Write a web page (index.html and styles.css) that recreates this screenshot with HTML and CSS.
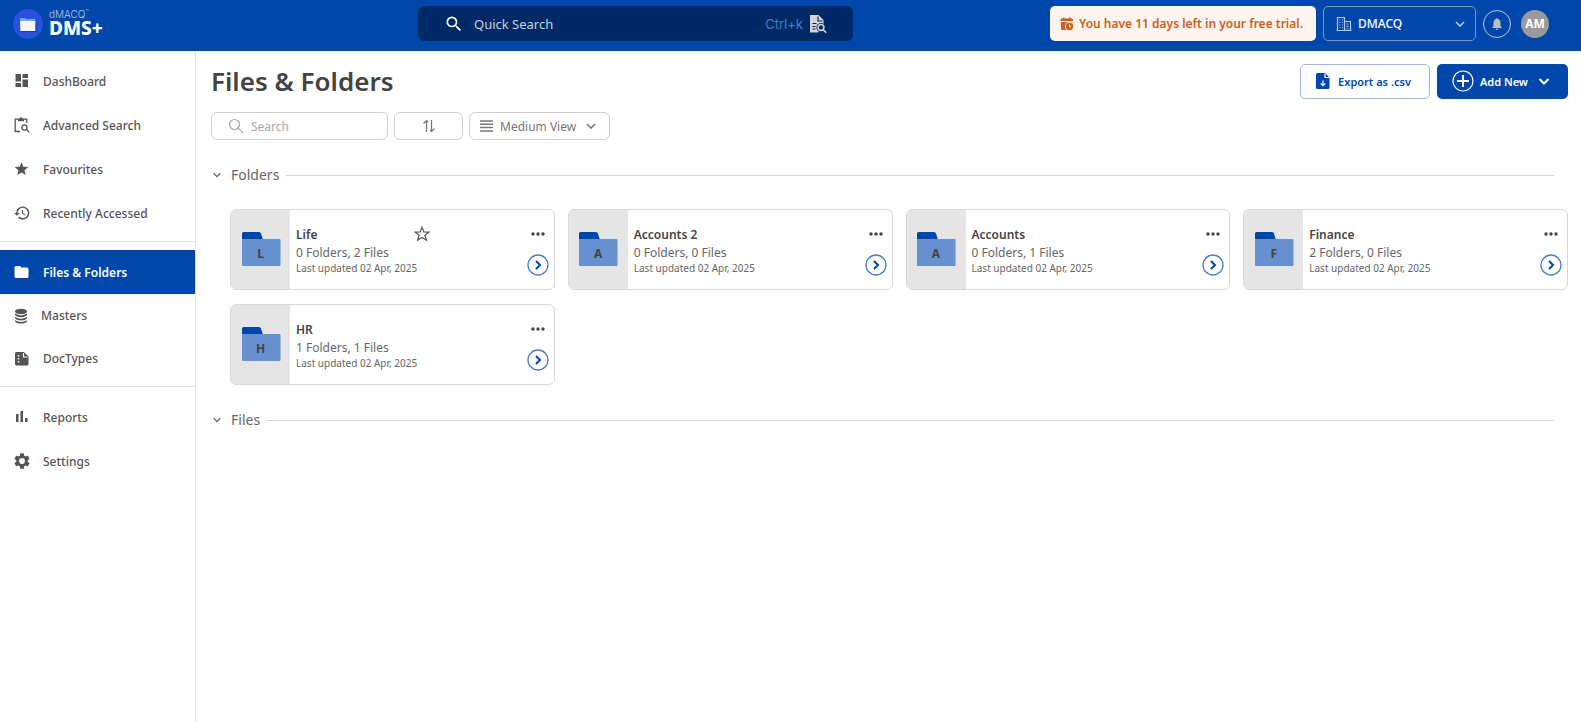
FILE: index.html
```html
<!DOCTYPE html>
<html lang="en">
<head>
    <meta charset="UTF-8">
    <meta name="viewport" content="width=device-width, initial-scale=1.0">
    <title>Files &amp; Folders</title>
    <link rel="stylesheet" href="styles.css">
</head>
<body>
    <!-- shared icons -->
    <svg class="sprite" aria-hidden="true">
        <symbol id="chevron" viewBox="0 0 12 12"><path d="M2 4l4 4 4-4" fill="none" stroke="currentColor" stroke-width="1.6"/></symbol>
        <symbol id="folder" viewBox="0 0 40 36">
            <path d="M1 9V2.500Q1 1 2.500 1H18q1.500 0 2 1.500L22 9z" fill="#0047ab"/>
            <path d="M1 8h37.500q1 0 1 1v25q0 1-1 1H2q-1 0-1-1z" fill="#6790d0"/>
        </symbol>
        <symbol id="dots" viewBox="0 0 14 4"><circle cx="2" cy="2" r="1.700"/><circle cx="7" cy="2" r="1.700"/><circle cx="12" cy="2" r="1.700"/></symbol>
        <symbol id="open" viewBox="0 0 22 22">
            <circle cx="11" cy="11" r="10" fill="none" stroke="#4a7cc8" stroke-width="1.300"/>
            <path d="M9 7l4 4-4 4" fill="none" stroke="#0047ab" stroke-width="2"/>
        </symbol>
    </svg>

    <header class="topbar">
        <a href="#" class="logo">
            <svg width="30" height="30" viewBox="0 0 30 30">
                <circle cx="15" cy="15" r="15" fill="#2a50dd"/>
                <path d="M7 9h5l1 1h9v4H7z" fill="#6ea6e4"/>
                <path d="M7 12h15.500v10H7.500z" fill="#f4f6f8"/>
                <path d="M8 22.500h15v-9" fill="none" stroke="#1f3fae" stroke-width="1"/>
            </svg>
            <span class="logo-text">
                <span class="logo-small">dMACQ<sup>™</sup></span>
                <span class="logo-big">DMS+</span>
            </span>
        </a>
        <div class="quick-search">
            <svg width="20" height="20" viewBox="0 0 24 24" fill="#fff"><path d="M15.500 14h-.79l-.28-.27A6.470 6.470 0 0 0 16 9.500 6.500 6.500 0 1 0 9.500 16c1.610 0 3.090-.59 4.230-1.570l.27.28v.79l5 4.990L20.490 19l-4.990-5zm-6 0C7.010 14 5 11.990 5 9.500S7.010 5 9.500 5 14 7.010 14 9.500 11.990 14 9.500 14z"/></svg>
            <input type="text" placeholder="Quick Search" aria-label="Quick Search">
            <span class="shortcut">Ctrl+k</span>
            <svg width="18" height="18" viewBox="0 0 18 18">
                <path d="M1 0h8.500l5 5v5L9 17.500H1z" fill="#d4d4d8"/>
                <path d="M9 1.500V6h4.500M3.500 8.500h4M3.500 11.500h3M3.500 14h3" fill="none" stroke="#002a66" stroke-width="1.200"/>
                <circle cx="12" cy="12.500" r="4.600" fill="#002a66"/>
                <circle cx="12" cy="12.500" r="2.900" fill="none" stroke="#d4d4d8" stroke-width="1.500"/>
                <path d="M14.200 14.700l3 3" stroke="#d4d4d8" stroke-width="1.600"/>
            </svg>
        </div>
        <div class="top-right">
            <div class="trial">
                <svg width="14" height="14" viewBox="0 0 14 14">
                    <path d="M3 .5h1.500v1H9v-1h1.500v1H12q1 0 1 1V4H.500V2.500q0-1 1-1H3z" fill="#c9601c"/>
                    <path d="M1 5h11.500v4H7v4H2.500Q1 13 1 11.500z" fill="#c9601c"/>
                    <circle cx="9.500" cy="9.500" r="4.500" fill="#fff4ef"/>
                    <circle cx="9.500" cy="9.500" r="3.700" fill="#c9601c"/>
                    <path d="M9.500 7.700v2h1.600" fill="none" stroke="#fff4ef"/>
                </svg>
                <span>You have 11 days left in your free trial.</span>
            </div>
            <label class="company">
                <svg width="16" height="16" viewBox="0 0 16 16" fill="none" stroke="#b5c7e8" stroke-width="1.200">
                    <path d="M1.500 14.500v-13h7v13M8.500 5.500h6v9M.5 14.500h15M3.500 4h1M6 4h1M3.500 6.500h1M6 6.500h1M3.500 9h1M6 9h1M3.500 11.500h1M6 11.500h1M10.500 8h2M10.500 10.500h2M10.500 13h2"/>
                </svg>
                <select aria-label="Company"><option>DMACQ</option></select>
                <svg class="company-arrow" width="12" height="12"><use href="#chevron"/></svg>
            </label>
            <button type="button" class="bell" aria-label="Notifications">
                <svg width="12" height="14" viewBox="0 0 12 14" fill="#b9bdc4"><path d="M6 1.200c.6 0 .9.400.9.900 1.700.4 2.600 1.800 2.600 3.600V9l1.200 1.300v.7H1.300v-.7L2.500 9V5.700c0-1.800.9-3.200 2.600-3.600 0-.5.300-.9.900-.9zM4.800 11.700h2.400a1.200 1.200 0 0 1-2.400 0z"/></svg>
            </button>
            <button type="button" class="avatar">AM</button>
        </div>
    </header>

    <div class="layout">
        <nav class="sidebar">
            <div class="nav-group">
                <a href="#" class="nav-item">
                    <svg width="16" height="16" viewBox="0 0 16 16"><path d="M1.500 1h5.500v7.500H1.500zM8.500 1H14v4H8.500zM1.500 10H7v4H1.500zM8.500 6.500H14V14H8.500z"/></svg>
                    <span>DashBoard</span>
                </a>
                <a href="#" class="nav-item">
                    <svg width="16" height="16" viewBox="0 0 16 16">
                        <g fill="none" stroke="currentColor" stroke-width="1.300">
                            <path d="M6 14.500H1.200V2.200H4M10 2.200h2.800V6"/>
                            <circle cx="10.500" cy="10.500" r="2.600"/><path d="M12.400 12.400l2.800 2.800"/>
                        </g>
                        <path d="M4 1.500h6v2.700H4z"/><circle cx="7" cy="1.500" r="1.300"/>
                    </svg>
                    <span>Advanced Search</span>
                </a>
                <a href="#" class="nav-item">
                    <svg width="16" height="16" viewBox="0 0 16 16"><path d="M7.500 1.200l1.900 4.500 4.900.4-3.700 3.200 1.100 4.800-4.200-2.600-4.200 2.600 1.100-4.800L.7 6.100l4.900-.4z"/></svg>
                    <span>Favourites</span>
                </a>
                <a href="#" class="nav-item">
                    <svg width="16" height="16" viewBox="1 1 22 22"><path d="M13 3a9 9 0 0 0-9 9H1l3.900 3.900L9 12H6a7 7 0 1 1 2.060 4.940l-1.420 1.420A9 9 0 1 0 13 3zm-1 5v5l4.280 2.540.72-1.210-3.500-2.080V8z"/></svg>
                    <span>Recently Accessed</span>
                </a>
            </div>
            <div class="nav-group">
                <a href="#" class="nav-item active">
                    <svg width="16" height="16" viewBox="0 0 16 16"><path d="M2 2h4l1.500 1.500H13q1.500 0 1.500 1.500v7.500q0 1.500-1.500 1.500H2Q.5 14 .5 12.500v-9Q.5 2 2 2z"/></svg>
                    <span>Files &amp; Folders</span>
                </a>
                <a href="#" class="nav-item short">
                    <svg width="14" height="16" viewBox="0 0 14 16"><ellipse cx="7" cy="3.500" rx="6" ry="2.700"/><path d="M1 5.600q6 3.600 12 0v1.200q-1 2.400-6 2.400T1 6.800zM1 8.900q6 3.600 12 0v1.200q-1 2.400-6 2.400t-6-2.400zM1 12.200q6 3.600 12 0v1q-1 2.400-6 2.400t-6-2.400z"/></svg>
                    <span>Masters</span>
                </a>
                <a href="#" class="nav-item short">
                    <svg width="16" height="16" viewBox="0 0 16 16"><path d="M2.500 1H10l4.500 4.500v7.500q0 1.500-1.500 1.500H2.500Q1 14.500 1 13V2.500Q1 1 2.500 1z"/><path d="M9.500 2v4h4" fill="none" stroke="#fff" stroke-width="1.200"/><path d="M4.500 4v8" stroke="#fff" stroke-width="1.500" stroke-dasharray="1.500 1.500"/></svg>
                    <span>DocTypes</span>
                </a>
            </div>
            <div class="nav-group">
                <a href="#" class="nav-item">
                    <svg width="16" height="16" viewBox="0 0 16 16"><path d="M2 5h2.500v8H2zM6.500 2H9v11H6.500zM11 9h2.500v4H11z"/></svg>
                    <span>Reports</span>
                </a>
                <a href="#" class="nav-item">
                    <svg width="16" height="16" viewBox="2 2 20 20"><path d="M19.140 12.940c.04-.3.060-.61.060-.94s-.02-.64-.07-.94l2.030-1.580c.18-.14.230-.41.120-.61l-1.920-3.320c-.12-.22-.37-.29-.59-.22l-2.390.96c-.5-.38-1.030-.7-1.620-.94l-.36-2.540A.48.48 0 0 0 13.920 2.400h-3.840c-.24 0-.43.170-.47.410l-.36 2.540c-.59.240-1.130.570-1.620.94l-2.390-.96c-.22-.08-.47 0-.59.220L2.740 8.870c-.12.210-.08.470.12.610l2.030 1.580c-.05.300-.09.630-.09.94s.02.640.07.94l-2.030 1.580c-.18.140-.23.410-.12.610l1.920 3.320c.12.220.37.290.59.220l2.390-.96c.5.380 1.030.700 1.620.94l.36 2.540c.05.240.24.410.48.410h3.840c.24 0 .44-.17.470-.41l.36-2.540c.59-.24 1.130-.56 1.620-.94l2.390.96c.22.080.47 0 .59-.22l1.920-3.320c.12-.22.070-.47-.12-.61zM12 15.600a3.600 3.600 0 1 1 0-7.200 3.600 3.600 0 0 1 0 7.200z"/></svg>
                    <span>Settings</span>
                </a>
            </div>
        </nav>

        <main class="content">
            <div class="title-bar">
                <h1>Files &amp; Folders</h1>
                <div class="actions">
                    <button type="button" class="btn btn-outline">
                        <svg width="14" height="16" viewBox="0 0 14 16"><path d="M1.500 0H9l4.500 4.500v10q0 1.500-1.500 1.500H1.500Q0 16 0 14.500v-13Q0 0 1.500 0z" fill="#0047ab"/><path d="M9 .5v4h4.500M7 7.500v5M4.700 10.300L7 12.600l2.300-2.300" fill="none" stroke="#fff" stroke-width="1.200"/></svg>
                        Export as .csv
                    </button>
                    <button type="button" class="btn btn-primary">
                        <svg width="22" height="22" viewBox="0 0 22 22" fill="none" stroke="#fff"><circle cx="11" cy="11" r="10" stroke-width="1.200"/><path d="M11 5v12M5 11h12" stroke-width="2"/></svg>
                        Add New
                        <svg class="btn-arrow" width="14" height="14" viewBox="0 0 14 14"><path d="M2.500 5L7 9.500 11.500 5" fill="none" stroke="#fff" stroke-width="2"/></svg>
                    </button>
                </div>
            </div>

            <div class="toolbar">
                <label class="search">
                    <svg width="16" height="16" viewBox="0 0 16 16" fill="none" stroke="#a9a9a9" stroke-width="1.200"><circle cx="6.500" cy="6.500" r="5"/><path d="M10.200 10.200l5 5"/></svg>
                    <input type="text" placeholder="Search" aria-label="Search">
                </label>
                <button type="button" class="sort" aria-label="Sort">
                    <svg width="14" height="14" viewBox="0 0 14 14" fill="none" stroke="#777" stroke-width="1.200"><path d="M4.500 13V1.500M1.500 4.500l3-3 1.500 1.500M9.500 1v11.500M12.500 9.500l-3 3L8 11"/></svg>
                </button>
                <label class="view">
                    <svg width="14" height="12" viewBox="0 0 14 12" fill="none" stroke="#777" stroke-width="1.500"><path d="M0 1h13M0 4.300h13M0 7.600h13M0 11h13"/></svg>
                    <select aria-label="View size"><option>Medium View</option></select>
                    <svg width="12" height="12"><use href="#chevron"/></svg>
                </label>
            </div>

            <section>
                <h2 class="section-head">
                    <svg width="10" height="10"><use href="#chevron"/></svg>
                    <span>Folders</span>
                </h2>
                <div class="cards">
                    <article class="card">
                        <div class="thumb"><svg width="40" height="36"><use href="#folder"/></svg><span>L</span></div>
                        <div class="info">
                            <div class="name">
                                <h3>Life</h3>
                                <button type="button" class="icon-btn" aria-label="Favourite">
                                    <svg width="16" height="16" viewBox="0 0 16 16"><path d="M8 1.200l1.800 4.700 5.200.2-4.100 3.100 1.500 5L8 11.400l-4.400 2.800 1.500-5L1 6.100l5.200-.2z" fill="none" stroke="#555" stroke-width="1.200"/></svg>
                                </button>
                            </div>
                            <p class="count">0 Folders, 2 Files</p>
                            <p class="date">Last updated 02 Apr, 2025</p>
                        </div>
                        <div class="card-actions">
                            <button type="button" class="icon-btn" aria-label="More"><svg width="14" height="4"><use href="#dots"/></svg></button>
                            <button type="button" class="icon-btn" aria-label="Open"><svg width="22" height="22"><use href="#open"/></svg></button>
                        </div>
                    </article>
                    <article class="card">
                        <div class="thumb"><svg width="40" height="36"><use href="#folder"/></svg><span>A</span></div>
                        <div class="info">
                            <div class="name"><h3>Accounts 2</h3></div>
                            <p class="count">0 Folders, 0 Files</p>
                            <p class="date">Last updated 02 Apr, 2025</p>
                        </div>
                        <div class="card-actions">
                            <button type="button" class="icon-btn" aria-label="More"><svg width="14" height="4"><use href="#dots"/></svg></button>
                            <button type="button" class="icon-btn" aria-label="Open"><svg width="22" height="22"><use href="#open"/></svg></button>
                        </div>
                    </article>
                    <article class="card">
                        <div class="thumb"><svg width="40" height="36"><use href="#folder"/></svg><span>A</span></div>
                        <div class="info">
                            <div class="name"><h3>Accounts</h3></div>
                            <p class="count">0 Folders, 1 Files</p>
                            <p class="date">Last updated 02 Apr, 2025</p>
                        </div>
                        <div class="card-actions">
                            <button type="button" class="icon-btn" aria-label="More"><svg width="14" height="4"><use href="#dots"/></svg></button>
                            <button type="button" class="icon-btn" aria-label="Open"><svg width="22" height="22"><use href="#open"/></svg></button>
                        </div>
                    </article>
                    <article class="card">
                        <div class="thumb"><svg width="40" height="36"><use href="#folder"/></svg><span>F</span></div>
                        <div class="info">
                            <div class="name"><h3>Finance</h3></div>
                            <p class="count">2 Folders, 0 Files</p>
                            <p class="date">Last updated 02 Apr, 2025</p>
                        </div>
                        <div class="card-actions">
                            <button type="button" class="icon-btn" aria-label="More"><svg width="14" height="4"><use href="#dots"/></svg></button>
                            <button type="button" class="icon-btn" aria-label="Open"><svg width="22" height="22"><use href="#open"/></svg></button>
                        </div>
                    </article>
                    <article class="card">
                        <div class="thumb"><svg width="40" height="36"><use href="#folder"/></svg><span>H</span></div>
                        <div class="info">
                            <div class="name"><h3>HR</h3></div>
                            <p class="count">1 Folders, 1 Files</p>
                            <p class="date">Last updated 02 Apr, 2025</p>
                        </div>
                        <div class="card-actions">
                            <button type="button" class="icon-btn" aria-label="More"><svg width="14" height="4"><use href="#dots"/></svg></button>
                            <button type="button" class="icon-btn" aria-label="Open"><svg width="22" height="22"><use href="#open"/></svg></button>
                        </div>
                    </article>
                </div>
            </section>

            <section>
                <h2 class="section-head">
                    <svg width="10" height="10"><use href="#chevron"/></svg>
                    <span>Files</span>
                </h2>
            </section>
        </main>
    </div>
</body>
</html>
```
FILE: styles.css
```css
* {
    margin: 0;
    padding: 0;
    box-sizing: border-box;
}
body {
    min-height: 100vh;
    display: flex;
    flex-direction: column;
    font-family: "Noto Sans", "Open Sans", sans-serif;
    font-size: 12px;
    color: #444;
    background-color: #fff;
}
a {
    text-decoration: none;
    color: inherit;
}
button, input, select {
    font: inherit;
    color: inherit;
    background: none;
    border: none;
    outline: none;
}
button {
    cursor: pointer;
}
select {
    appearance: none;
    flex: 1;
    min-width: 0;
}
svg {
    display: block;
    flex: none;
}
.sprite {
    position: absolute;
    width: 0;
    height: 0;
}

/* top bar */
.topbar {
    height: 51px;
    padding: 0 32px 4px 13px;
    display: flex;
    align-items: center;
    background-color: #0047ab;
    color: #fff;
}
.logo {
    width: 405px;
    display: flex;
    align-items: center;
    gap: 6px;
}
.logo-text {
    display: flex;
    flex-direction: column;
}
.logo-small {
    font-family: Inter, sans-serif;
    font-size: 10px;
    line-height: 9px;
    font-weight: 300;
    color: #b5c7e8;
}
.logo-small sup {
    font-size: 6px;
    line-height: 0;
}
.logo-big {
    font-size: 19px;
    line-height: 18px;
    font-weight: 800;
}
.quick-search {
    width: 435px;
    height: 35px;
    padding: 0 26px;
    display: flex;
    align-items: center;
    border-radius: 6px;
    background-color: #002a66;
    font-size: 13px;
}
.quick-search input {
    flex: 1;
    min-width: 0;
    margin-left: 10px;
}
.quick-search input::placeholder {
    color: #c9d0dc;
}
.shortcut {
    margin-right: 6px;
    font-family: Inter, sans-serif;
    color: #4a7cc8;
}
.top-right {
    margin-left: auto;
    display: flex;
    align-items: center;
    gap: 7px;
}
.trial {
    height: 35px;
    padding: 0 13px 0 10px;
    display: flex;
    align-items: center;
    gap: 5px;
    border-radius: 5px;
    background-color: #fff4ef;
    color: #c9601c;
    font-weight: 600;
}
.company {
    width: 153px;
    height: 35px;
    padding: 0 9px 0 12px;
    display: flex;
    align-items: center;
    gap: 6px;
    border: 1px solid #7f94b8;
    border-radius: 5px;
    font-weight: 500;
}
.company-arrow {
    color: #b5c7e8;
}
.bell {
    width: 28px;
    height: 28px;
    display: flex;
    align-items: center;
    justify-content: center;
    border: 1px solid #b5c7e8;
    border-radius: 50%;
}
.avatar {
    width: 28px;
    height: 28px;
    margin-left: 3px;
    border-radius: 50%;
    background-color: #9b9b9b;
    font-weight: 700;
}

.layout {
    flex: 1;
    display: flex;
}

/* sidebar */
.sidebar {
    width: 196px;
    flex: none;
    border-right: 1px solid #e2e2e2;
    font-weight: 500;
    color: #555;
}
.nav-group {
    padding: 8px 0 6px;
    border-bottom: 1px solid #e2e2e2;
}
.nav-group:last-child {
    border-bottom: none;
}
.nav-item {
    height: 44px;
    padding-left: 14px;
    display: flex;
    align-items: center;
    gap: 13px;
}
.nav-item svg {
    fill: currentColor;
}
.nav-item.short {
    height: 43px;
}
.nav-item.active {
    background-color: #0047ab;
    color: #fff;
    font-weight: 600;
}

/* main area */
.content {
    flex: 1;
    min-width: 0;
    padding: 11px 13px 0 15px;
}
.title-bar {
    display: flex;
    align-items: center;
    justify-content: space-between;
}
h1 {
    font-size: 26px;
    line-height: 38px;
    font-weight: 600;
}
.actions {
    display: flex;
    gap: 7px;
}
.btn {
    height: 35px;
    display: flex;
    align-items: center;
    border-radius: 5px;
    font-size: 11px;
    font-weight: 600;
}
.btn-outline {
    padding: 0 18px 0 15px;
    gap: 8px;
    border: 1px solid #9db9e2;
    color: #0047ab;
}
.btn-primary {
    padding: 0 17px 0 15px;
    gap: 6px;
    background-color: #0047ab;
    color: #fff;
}
.btn-arrow {
    margin-left: 3px;
}
.toolbar {
    margin-top: 12px;
    display: flex;
    gap: 6px;
}
.search, .sort, .view {
    height: 28px;
    display: flex;
    align-items: center;
    border: 1px solid #d0d0d0;
    border-radius: 6px;
}
.search {
    width: 177px;
    padding: 0 16px;
    gap: 7px;
}
.search input {
    flex: 1;
    min-width: 0;
}
.search input::placeholder {
    color: #a9a9a9;
}
.sort {
    width: 69px;
    justify-content: center;
}
.view {
    width: 141px;
    padding: 0 12px 0 10px;
    gap: 6px;
    color: #777;
}
.section-head {
    height: 20px;
    margin-top: 25px;
    padding: 0 14px 0 1px;
    display: flex;
    align-items: center;
    font-size: 14px;
    line-height: 20px;
    font-weight: 400;
    color: #666;
}
.section-head span {
    margin: 0 7px 0 9px;
}
.section-head::after {
    content: "";
    flex: 1;
    border-top: 1px solid #d8d8d8;
}
.cards {
    margin: 24px 0 0 19px;
    display: grid;
    grid-template-columns: repeat(4, 1fr);
    gap: 14px 13px;
}
.card {
    height: 81px;
    display: flex;
    border: 1px solid #d8d8d8;
    border-radius: 6px;
    overflow: hidden;
}
.thumb {
    width: 59px;
    display: grid;
    place-items: center;
    padding-bottom: 2px;
    background-color: #e5e5e5;
}
.thumb svg, .thumb span {
    grid-area: 1 / 1;
}
.thumb span {
    padding-top: 10px;
    font-weight: 700;
}
.info {
    flex: 1;
    padding: 14px 0 0 6px;
}
.name {
    width: 134px;
    height: 20px;
    display: flex;
    align-items: center;
    justify-content: space-between;
}
h3 {
    font-size: 12px;
    font-weight: 600;
}
.count {
    line-height: 17px;
    color: #666;
}
.date {
    font-size: 10px;
    line-height: 14px;
    color: #666;
}
.card-actions {
    padding: 22px 5px 13px 0;
    display: flex;
    flex-direction: column;
    align-items: center;
    justify-content: space-between;
    color: #444;
}
.icon-btn svg {
    fill: currentColor;
}
```
